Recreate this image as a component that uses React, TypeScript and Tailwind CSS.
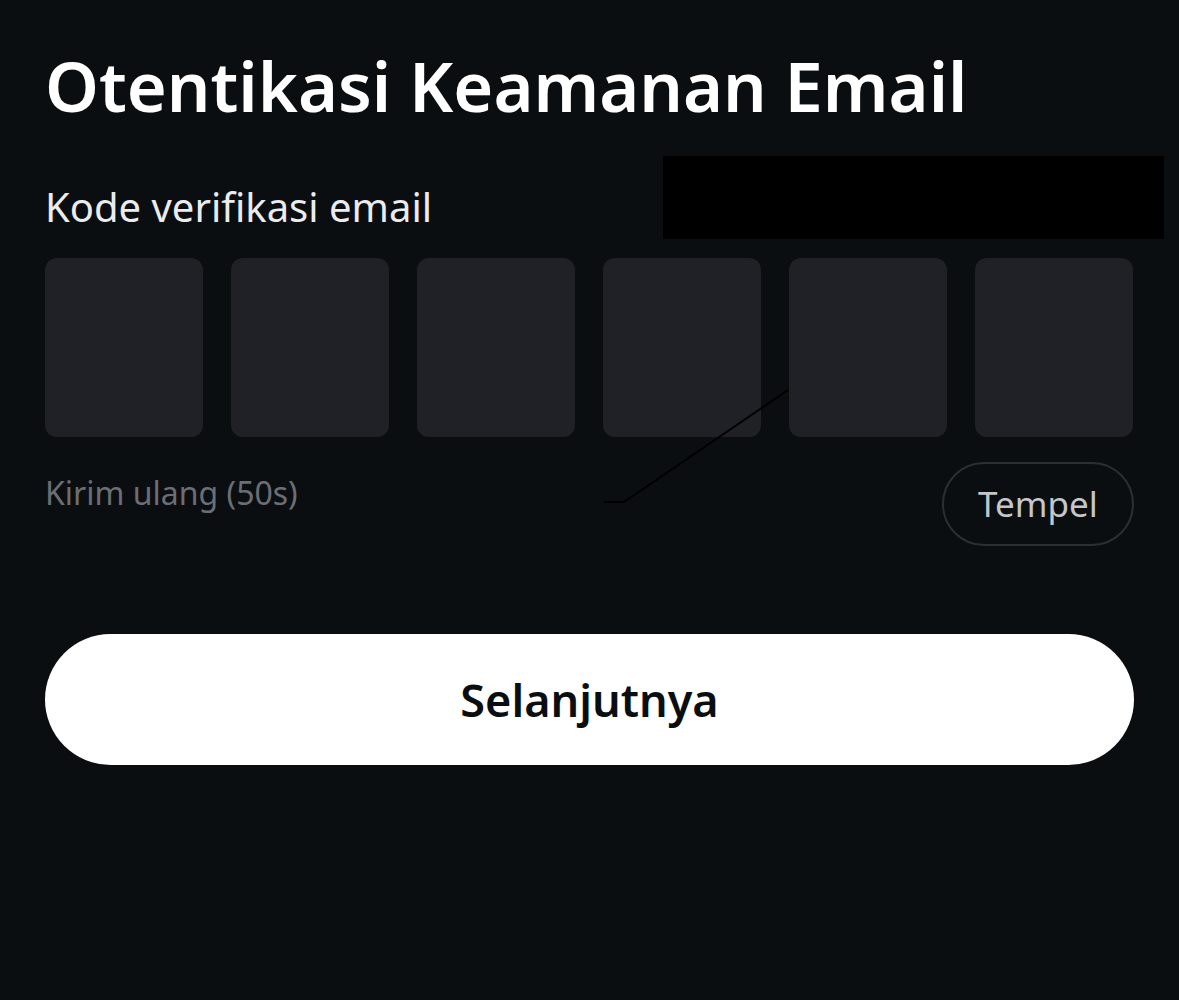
import React from "react";

export default function App() {
  const boxes = [0, 1, 2, 3, 4, 5];
  return (
    <div
      className="relative w-[1179px] h-[1000px] bg-[#0b0e11] overflow-hidden"
      style={{ fontFamily: '"Noto Sans", "Open Sans", sans-serif' }}
    >
      <div className="flex flex-col pl-[45px] pr-[45px] pt-[43px]">
        <h1 className="text-[68.5px] leading-[86px] font-semibold text-white">
          Otentikasi Keamanan Email
        </h1>
        <div className="mt-[52px] text-[40px] leading-[52px] text-[#eaecef]">
          Kode verifikasi email
        </div>
        <div className="mt-[25px] flex gap-[28px]">
          {boxes.map((b) => (
            <div key={b} className="w-[158px] h-[179px] rounded-[12px] bg-[#202127]" />
          ))}
        </div>
        <div className="mt-[25px] flex items-center justify-between">
          <div className="text-[32px] leading-[40px] text-[#6b6e75] -mt-[22px]">
            Kirim ulang (50s)
          </div>
          <button className="w-[192px] h-[84px] rounded-full border-2 border-[#2b2e33] text-[35px] text-[#c4c6ca]">
            Tempel
          </button>
        </div>
        <button className="mt-[88px] h-[131px] w-[1089px] rounded-full bg-white text-[45px] font-semibold text-[#0b0e11]">
          Selanjutnya
        </button>
      </div>
      <div className="absolute left-[663px] top-[156px] w-[501px] h-[83px] bg-black" />
      <svg className="absolute left-0 top-0" width="1179" height="1000">
        <path d="M604 502 L624 502 L788 390" stroke="#000" strokeWidth="2" fill="none" />
      </svg>
    </div>
  );
}
